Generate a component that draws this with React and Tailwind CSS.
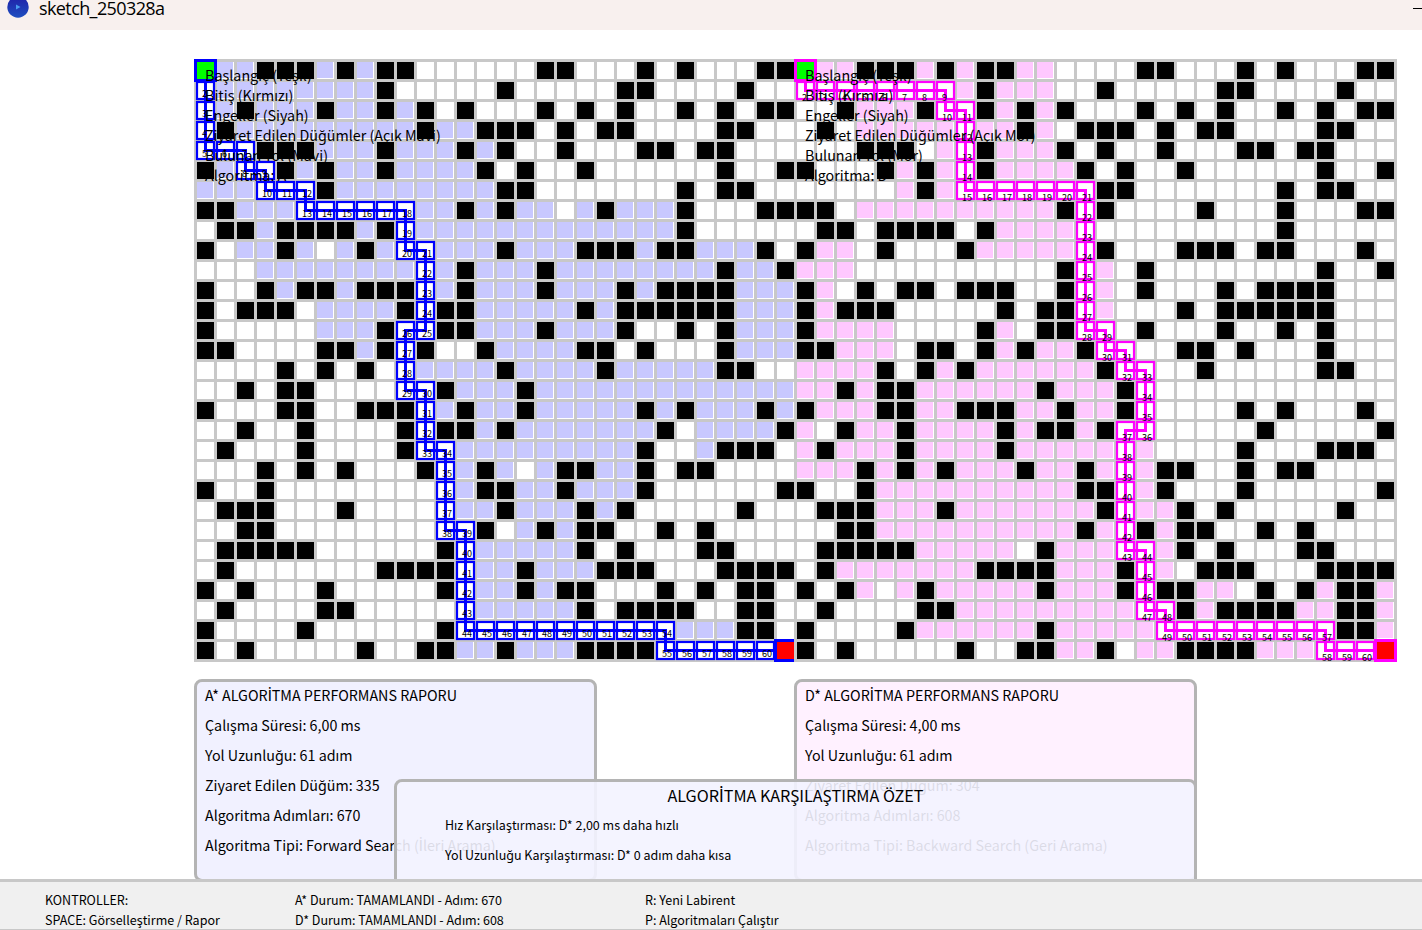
const WALK_A = [
  "Svv###v#v##......##...#.#...##",
  "Pvvvvvvvv#.....#.....##....#..",
  "Pv#vvv#vv#v#.#...#.#.#..#.#.##",
  "P#vvvvvvvvv#vv###.#.##....##..",
  "PPP###vvv#vvv#v#..#...##.##...",
  "#vPP#v#vv#vvvv#.#..#......#..#",
  "vvvPPP#vvvvvvvv##.......#.##..",
  "##vvvPPPPPPvv#v#vv.v#vvv#...##",
  ".##v####v#Pvvvvvvvvvvvvv#.....",
  "#.vv#v.v#vPPvvv#vvv###v##vvv#.",
  "...vvvvvvvvPv#vvv#vvvvvvvv#vv#",
  "#..#v##v###Pv#vvv#vvv#v####vvv",
  "#.###.vvvv#P##vvvvv#v######vvv",
  "#.....vvv#PP##vvv#vvv#..#.#vvv",
  "##....##v#P#..#vvvv##.#...#vvv",
  "....#.#.#.Pvvvv#vvvv#vvvvv##..",
  "..#.##....PP#vvv#vvvvvvvvvvvvv",
  "#...##..###Pv#vv#vvvvv#v#vvv#v",
  "..#..#....#P##v#vvvvvvv#.vvvv#",
  ".#...#....#PPvvvvvvvvv#..v###.",
  "...#.#.#...#Pv#v.v##vv#.##....",
  "#..#........Pv##vv#vvv#......#",
  ".###...#....Pvv#vvv#v#.....#..",
  "..##........PP#.v#v##..#.#....",
  ".#####......#Pvvvvv#.#...##...",
  ".#.......####Pvv#vvv###...####",
  "#.#...#.....#Pvv#v##...#.#.##.",
  ".#....##.....Pvvvvv#.####..##.",
  "#....#......#PPPPPPPPPPPvvv##.",
  "#.#.....#..##vv#vvv####PPPPPPG",
];

const WALK_B = [
  "Svv###v#v##vv....##...#.#...##",
  "PPPPPPPPv#vvv..#.....##....#..",
  "..#vvv#PP#v#v#...#.#.#..#.#.##",
  ".#.vvvvvPvv#v.###.#.##....##..",
  "...###.vP#vvv#.#..#...##.##...",
  "#...#v#vP#vvvv#.#..#......#..#",
  ".....v#vPPPPPPP##.......#.##..",
  "##.vvvvvvvvvv#P#....#...#...##",
  ".##.####.#vvvvP.........#.....",
  "#vv.#...#vvvvvP#...###.##...#.",
  "vvv..........#Pv.#........#..#",
  "#v.#.##.###..#Pv.#...#.####...",
  "#v###.....#.##Pv...#.######...",
  "#vvvv....#v.##PP.#...#..#.#...",
  "##vvv.##.#v#vv#PP..##.#...#...",
  "vvvv#.#v#vvvvvv#PP..#.....##..",
  "vv#v##vvvvvv#vvv#P............",
  "#vvv##vv###vv#vv#P....#.#...#.",
  "v.#vv#vvvv#v##v#PP.....#.....#",
  "v#vvv#vvvv#vvvvvPv....#...###.",
  "vvv#v#v#vvv#vv#vPv##..#.##....",
  "#..#vvvvvvvvvv##Pv#...#......#",
  ".###vvv#vvvvvvv#Pvv#.#.....#..",
  "..##vvvvvvvvvv#vP#v##..#.#....",
  ".#####vvvvv.#vvvPPv#.#...##...",
  ".#vvvvvvv####vvv#Pv.###...####",
  "#.#v.v#vvvvv#vvv#P##vv.#.#v##v",
  ".#....##vvvvvvvvvPP#v####vv##v",
  "#....#vvvvvv#vvvvvPPPPPPPPP##v",
  "#.#.....#..##vv#.vv####vvvPPPG",
];

const CORNERS_A = [[0, 0], [0, 4], [2, 4], [2, 5], [3, 5], [3, 6], [5, 6], [5, 7], [10, 7], [10, 9], [11, 9], [11, 13], [10, 13], [10, 16], [11, 16], [11, 19], [12, 19], [12, 23], [13, 23], [13, 28], [23, 28], [23, 29], [29, 29]];
const CORNERS_B = [[0, 0], [0, 1], [7, 1], [7, 2], [8, 2], [8, 6], [14, 6], [14, 13], [15, 13], [15, 14], [16, 14], [16, 15], [17, 15], [17, 18], [16, 18], [16, 24], [17, 24], [17, 27], [18, 27], [18, 28], [26, 28], [26, 29], [29, 29]];

function expand(corners) {
  const out = [corners[0]];
  for (let i = 1; i < corners.length; i++) {
    let [x, y] = corners[i - 1];
    const [tx, ty] = corners[i];
    while (x !== tx || y !== ty) {
      x += Math.sign(tx - x);
      y += Math.sign(ty - y);
      out.push([x, y]);
    }
  }
  return out;
}

function cellClass(ch, visited) {
  if (ch === "#") return "bg-black";
  if (ch === "v") return visited;
  return "bg-white";
}

function Turkish({ children }) {
  return (
    <span>
      {children.split(/(İ)/).map((part, i) =>
        part === "İ" ? <span key={i} className="font-['Lato',sans-serif] leading-none text-[1.03em]">İ</span> : part
      )}
    </span>
  );
}

function Board({ rows, corners, color, visited, labelY, legend }) {
  const steps = expand(corners);
  return (
    <div className="relative w-[603px] h-[603px] shrink-0 bg-[#c8c8c8] p-[3px]">
      <div className="grid grid-cols-[repeat(30,17px)] auto-rows-[17px] gap-[3px]">
        {rows.flatMap((row, y) =>
          row.split("").map((ch, x) => <div key={`${x}-${y}`} className={cellClass(ch, visited)} />)
        )}
      </div>
      <svg className="absolute inset-0" width="603" height="603" viewBox="0 0 603 603">
        {steps.slice(1, -1).map(([x, y]) => (
          <rect key={`${x}-${y}`} x={x * 20 + 3} y={y * 20 + 3} width="17" height="17" fill="none" stroke={color} strokeWidth="2.2" />
        ))}
        <polyline
          points={corners.map(([x, y]) => `${x * 20 + 11.5},${y * 20 + 11.5}`).join(" ")}
          fill="none"
          stroke={color}
          strokeWidth="3"
        />
        <rect x="1.5" y="1.5" width="20" height="20" fill="#00ff00" stroke={color} strokeWidth="3" />
        <rect x="581.5" y="581.5" width="20" height="20" fill="#ff0000" stroke={color} strokeWidth="3" />
        <g className="font-['Noto_Sans_CJK_SC','Noto_Sans',sans-serif] text-[9px]" fill="#000000">
          {steps.slice(1, -1).map(([x, y], i) => (
            <text key={i} x={x * 20 + 8} y={y * 20 + labelY}>{i + 2}</text>
          ))}
        </g>
      </svg>
      <div className="absolute left-[11px] top-[6px] flex flex-col text-[14.3px] leading-5 whitespace-nowrap text-black">
        {legend.map((t) => <span key={t}>{t}</span>)}
      </div>
    </div>
  );
}

function Report({ lines, tone }) {
  return (
    <div className={`w-[403px] h-[203px] shrink-0 rounded-lg border-3 border-[#b4b4b4] pl-2 text-[14.3px] whitespace-nowrap text-black ${tone}`}>
      <div className="-mt-[2px] grid auto-rows-[30px] leading-[30px]">
        {lines.map((t) => <Turkish key={t}>{t}</Turkish>)}
      </div>
    </div>
  );
}

export default function App() {
  return (
    <div className="w-[1422px] h-[930px] overflow-hidden flex flex-col bg-white font-['Noto_Sans_CJK_SC','Noto_Sans',sans-serif]">
      <header className="h-[30px] shrink-0 bg-[#f8f0ee] flex items-start justify-between">
        <div className="flex items-start pl-[7px] gap-[10px]">
          <svg width="22" height="18" viewBox="0 0 22 18">
            <defs>
              <linearGradient id="orb" x1="0" y1="0" x2="0" y2="1">
                <stop offset="0" stopColor="#2020a8" />
                <stop offset="1" stopColor="#1e4fc0" />
              </linearGradient>
            </defs>
            <circle cx="11" cy="7" r="10.7" fill="url(#orb)" />
            <path d="M9 4.5 L13.5 7 L9 9.5 Z" fill="#4a9df0" />
          </svg>
          <span className="text-[18px] leading-4 tracking-[-0.6px] text-black font-['Open_Sans','Noto_Sans',sans-serif]">sketch_250328a</span>
        </div>
        <div className="mt-2 w-[9px] h-px bg-black" />
      </header>

      <main className="relative h-[849px] shrink-0 overflow-hidden pt-[29px] pl-[194px]">
        <div className="flex">
          <div className="w-[600px] overflow-hidden">
            <Board
              rows={WALK_A}
              corners={CORNERS_A}
              color="#0000ff"
              visited="bg-[#c8c8ff] border-r border-b border-white"
              labelY={18}
              legend={["Başlangıç (Yeşil)", "Bitiş (Kırmızı)", "Engeller (Siyah)", "Ziyaret Edilen Düğümler (Açık Mavi)", "Bulunan Yol (Mavi)", "Algoritma: A*"]}
            />
          </div>
          <Board
            rows={WALK_B}
            corners={CORNERS_B}
            color="#ff00ff"
            visited="bg-[#ffc8ff] border-r border-b border-white"
            labelY={22}
            legend={["Başlangıç (Yeşil)", "Bitiş (Kırmızı)", "Engeller (Siyah)", "Ziyaret Edilen Düğümler (Açık Mor)", "Bulunan Yol (Mor)", "Algoritma: D*"]}
          />
        </div>
        <div className="mt-[17px] flex gap-[197px]">
          <Report
            tone="bg-[#f1f1ff]"
            lines={["A* ALGORİTMA PERFORMANS RAPORU", "Çalışma Süresi: 6,00 ms", "Yol Uzunluğu: 61 adım", "Ziyaret Edilen Düğüm: 335", "Algoritma Adımları: 670", "Algoritma Tipi: Forward Search (İleri Arama)"]}
          />
          <Report
            tone="bg-[#fff1ff]"
            lines={["D* ALGORİTMA PERFORMANS RAPORU", "Çalışma Süresi: 4,00 ms", "Yol Uzunluğu: 61 adım", "Ziyaret Edilen Düğüm: 304", "Algoritma Adımları: 608", "Algoritma Tipi: Backward Search (Geri Arama)"]}
          />
        </div>
        <section className="absolute left-[394px] top-[749px] w-[803px] h-[153px] rounded-lg border-3 border-[#b4b4b4] bg-[#f3f3ff]/90 text-black whitespace-nowrap">
          <div className="-mt-[2px] grid auto-rows-[30px] leading-[30px] text-[12.53px]">
            <h2 className="text-center text-[16.2px]"><Turkish>ALGORİTMA KARŞILAŞTIRMA ÖZET</Turkish></h2>
            <span className="pl-12">Hız Karşılaştırması: D* 2,00 ms daha hızlı</span>
            <span className="pl-12">Yol Uzunluğu Karşılaştırması: D* 0 adım daha kısa</span>
          </div>
        </section>
      </main>

      <footer className="h-[51px] shrink-0 border-t-3 border-b border-t-[#c8c8c8] border-b-[#c8c8c8] bg-[#f0f0f0] pl-[45px] pt-2 grid grid-cols-[250px_350px_1fr] auto-rows-[20px] text-[12.53px] leading-5 whitespace-nowrap text-black">
        <span>KONTROLLER:</span>
        <span>A* Durum: TAMAMLANDI - Adım: 670</span>
        <span>R: Yeni Labirent</span>
        <span>SPACE: Görselleştirme / Rapor</span>
        <span>D* Durum: TAMAMLANDI - Adım: 608</span>
        <span>P: Algoritmaları Çalıştır</span>
      </footer>
    </div>
  );
}
